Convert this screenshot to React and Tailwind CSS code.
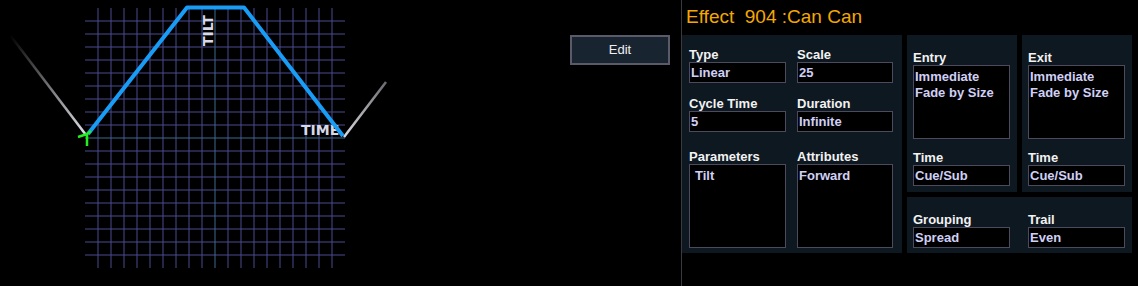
import React from "react";

const font = { fontFamily: '"Liberation Sans", Arial, sans-serif' };

function Field({ label, value, boxClass = "h-[21px]", multi, indent, className = "" }) {
  return (
    <div className={className}>
      <div className="text-[13px] leading-[15px] font-bold text-[#f2f2f2]">{label}</div>
      <div className={`${boxClass} bg-black border border-[#4e4a5e] text-[13px] font-bold text-[#d0d0f6] leading-[16px] ${indent ? "pl-[5px]" : "pl-[1px]"} ${multi ? "pt-[3px]" : "pt-[2px]"}`}>
        {Array.isArray(value) ? value.map((v) => <div key={v}>{v}</div>) : value}
      </div>
    </div>
  );
}

function Graph() {
  const vs = [];
  const hs = [];
  for (let k = 1; k < 20; k++) {
    const x = 85 + 13 * k;
    const y = 8 + 13 * k;
    if (k !== 10) {
      vs.push(<line key={"v" + k} x1={x} y1={8} x2={x} y2={268} stroke="#4a4a90" strokeWidth="1" />);
      hs.push(<line key={"h" + k} x1={85} y1={y} x2={345} y2={y} stroke="#4a4a90" strokeWidth="1" />);
    }
  }
  return (
    <svg width="400" height="286" className="block shrink-0">
      <defs>
        <linearGradient id="gl" gradientUnits="userSpaceOnUse" x1="10" y1="35" x2="85" y2="135">
          <stop offset="0" stopColor="#000" />
          <stop offset="1" stopColor="#e0e0e8" />
        </linearGradient>
        <linearGradient id="gr" gradientUnits="userSpaceOnUse" x1="345" y1="137" x2="386" y2="82">
          <stop offset="0" stopColor="#d8d8e0" />
          <stop offset="1" stopColor="#6a6a70" />
        </linearGradient>
      </defs>
      {vs}
      {hs}
      <line x1="215" y1="8" x2="215" y2="268" stroke="#3d6a8e" strokeWidth="1" />
      <line x1="85" y1="138" x2="345" y2="138" stroke="#3d6a8e" strokeWidth="1" />
      <line x1="10" y1="35" x2="86" y2="135" stroke="url(#gl)" strokeWidth="2.5" />
      <line x1="344" y1="137" x2="386" y2="82" stroke="url(#gr)" strokeWidth="2.5" />
      <text x="301" y="135" fontFamily="DejaVu Sans, sans-serif" fontWeight="bold" fontSize="14" fill="#d8d8e6">TIME</text>
      <text transform="translate(213,46) rotate(-90)" fontFamily="DejaVu Sans, sans-serif" fontWeight="bold" fontSize="14" fill="#d8d8e6">TILT</text>
      <polyline points="88,134 187,7.5 244,7.5 343,136" fill="none" stroke="#189cf6" strokeWidth="4" strokeLinejoin="round" />
      <path d="M87 134 L78 137 M87 134 L87 146 M87 134 L91 131" stroke="#22ee22" strokeWidth="2.5" fill="none" />
    </svg>
  );
}

export default function App() {
  return (
    <div className="w-[1138px] h-[286px] bg-black flex overflow-hidden" style={font}>
      <div className="w-[681px] flex shrink-0">
        <Graph />
        <div className="ml-[170px] mt-[35px] w-[100px] h-[30px] border-2 border-[#5a5a68] bg-[#182430] text-[#f0f0f0] text-[13px] flex items-center justify-center">
          Edit
        </div>
      </div>
      <div className="w-px bg-[#3a3a3e] shrink-0" />
      <div className="flex flex-col w-[456px]">
        <div className="h-[35px] pl-[4px] pt-[3px] text-[19px] text-[#f5a800] whitespace-pre">Effect  904 :Can Can</div>
        <div className="flex gap-[5px]">
          <div className="w-[220px] h-[218px] bg-[#0e1820] pl-[7px] pr-[9px] pt-[12px] grid grid-cols-[97px_96px] gap-x-[11px] content-start">
            <Field label="Type" value="Linear" />
            <Field label="Scale" value="25" />
            <Field label="Cycle Time" value="5" className="mt-[13px]" />
            <Field label="Duration" value="Infinite" className="mt-[13px]" />
            <Field label="Parameters" value="Tilt" boxClass="h-[84px]" multi indent className="mt-[17px]" />
            <Field label="Attributes" value="Forward" boxClass="h-[84px]" multi className="mt-[17px]" />
          </div>
          <div className="w-[225px] flex flex-col gap-[5px]">
            <div className="flex gap-[5px]">
              {["Entry", "Exit"].map((t) => (
                <div key={t} className="w-[110px] h-[157px] bg-[#0e1820] pl-[6px] pr-[7px] pt-[15px]">
                  <Field label={t} value={["Immediate", "Fade by Size"]} boxClass="h-[74px]" multi />
                  <Field label="Time" value="Cue/Sub" className="mt-[11px]" />
                </div>
              ))}
            </div>
            <div className="h-[56px] bg-[#0e1820] pl-[6px] pt-[15px] flex gap-[18px]">
              <Field label="Grouping" value="Spread" className="w-[97px]" />
              <Field label="Trail" value="Even" className="w-[97px]" />
            </div>
          </div>
        </div>
      </div>
    </div>
  );
}
